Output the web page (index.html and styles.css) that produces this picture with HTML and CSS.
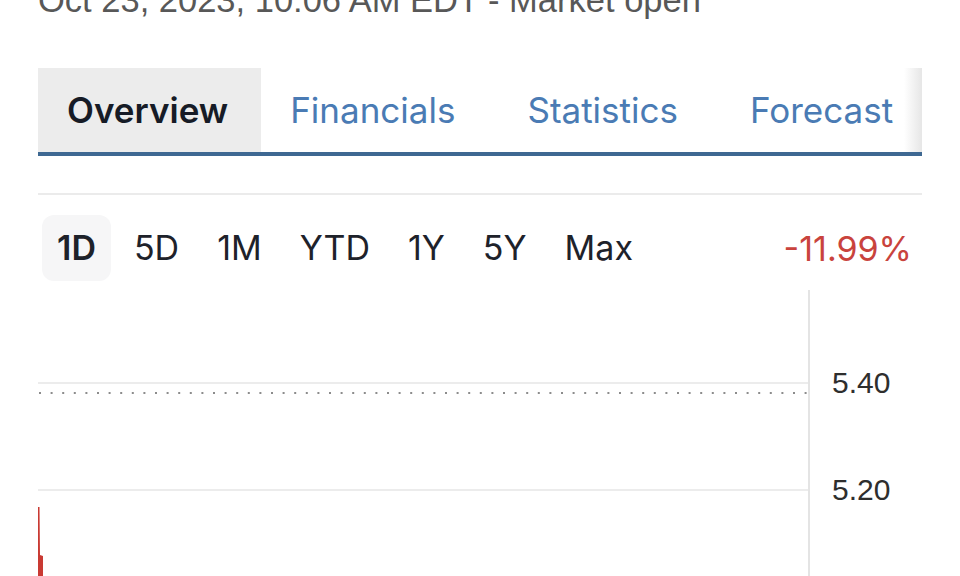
FILE: index.html
```html
<!DOCTYPE html>
<html>
<head>
  <meta charset="utf-8">
  <title>Quote - Overview</title>
  <link rel="stylesheet" href="styles.css">
</head>
<body>
  <div class="page">
    <div class="timestamp">Oct 23, 2023, 10:06 AM EDT - Market open</div>

    <nav class="tabs">
      <a class="tab active">Overview</a>
      <a class="tab">Financials</a>
      <a class="tab">Statistics</a>
      <a class="tab">Forecast</a>
    </nav>

    <div class="divider"></div>

    <div class="ranges">
      <span class="range active">1D</span>
      <span class="range">5D</span>
      <span class="range">1M</span>
      <span class="range">YTD</span>
      <span class="range">1Y</span>
      <span class="range">5Y</span>
      <span class="range">Max</span>
      <span class="change">-11.99%</span>
    </div>

    <div class="chart">
      <svg class="plot" width="770" height="290" viewBox="0 0 770 290">
        <line x1="0" y1="93" x2="770" y2="93" stroke="#ececec" stroke-width="2"/>
        <line x1="1" y1="103" x2="770" y2="103" stroke="#8c8c8c" stroke-width="2" stroke-dasharray="2 9.6"/>
        <line x1="0" y1="200" x2="770" y2="200" stroke="#ececec" stroke-width="2"/>
        <path d="M0 217 L1.5 217 L2 265 L5 266 L5 290 L0 290 Z" fill="#c93a33"/>
      </svg>
      <div class="axis">
        <span class="tick" style="top: 76px">5.40</span>
        <span class="tick" style="top: 183px">5.20</span>
      </div>
    </div>
  </div>
</body>
</html>
```

FILE: styles.css
```css
/* basic layout */
body {
  margin: 0;
  background: #fff;
  overflow: hidden;
}

.page {
  width: 884px;
  padding: 0 38px;
}

.timestamp {
  margin-top: -20px;
  font-family: "Liberation Sans", Arial, sans-serif;
  font-size: 34.5px;
  line-height: 40px;
  color: #585858;
  white-space: nowrap;
}

/* tabs */
.tabs {
  position: relative;
  display: flex;
  height: 84px;
  margin-top: 48px;
  border-bottom: 4px solid #3e6892;
  overflow: hidden;
}

.tabs::after {
  content: "";
  position: absolute;
  right: 0;
  top: 0;
  bottom: 0;
  width: 18px;
  background: linear-gradient(to right, rgba(255, 255, 255, 0), #e6e6e6);
}

.tab {
  padding: 0 33px 0 29px;
  font-family: Inter, "Noto Sans", sans-serif;
  font-size: 35px;
  line-height: 84px;
  color: #4a7bb4;
  white-space: nowrap;
}

.tab + .tab {
  padding: 0 43px 0 29px;
}

.tab.active {
  background: #ececec;
  color: #161b26;
  font-weight: 600;
}

.divider {
  height: 2px;
  margin-top: 37px;
  background: #ebebeb;
}

/* range selector */
.ranges {
  display: flex;
  align-items: center;
  gap: 8px;
  margin-top: 20px;
  padding: 0 10px 0 4px;
  font-family: Inter, "Noto Sans", sans-serif;
  font-size: 34px;
}

.range {
  height: 66px;
  padding: 0 15px;
  line-height: 66px;
  color: #1e222a;
  border-radius: 12px;
}

.range.active {
  background: #f6f6f7;
  font-weight: 600;
}

.change {
  margin-left: auto;
  color: #c9433d;
}

/* chart */
.chart {
  display: flex;
  height: 290px;
  margin-top: 9px;
}

.plot {
  display: block;
  flex: none;
}

.axis {
  position: relative;
  flex: 1;
  border-left: 2px solid #e4e4e4;
}

.tick {
  position: absolute;
  left: 22px;
  font-family: "Liberation Sans", Arial, sans-serif;
  font-size: 30px;
  line-height: 34px;
  color: #2e2e2e;
}
```
